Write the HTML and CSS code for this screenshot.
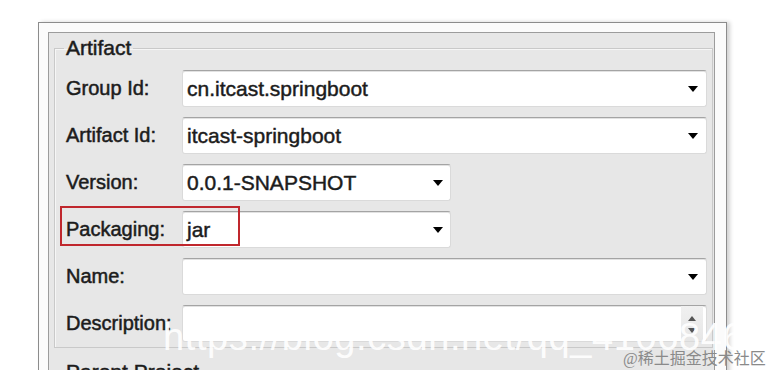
FILE: index.html
```html
<!DOCTYPE html>
<html lang="en">
  <head>
    <meta charset="utf-8">
    <link rel="stylesheet" href="styles.css">
    <title>New Maven Project</title>
  </head>
  <body>
    <div class="dialog">
      <div class="panel">
        <fieldset class="group">
          <legend>Artifact</legend>
          <div class="row">
            <label>Group Id:</label>
            <div class="field"><span>cn.itcast.springboot</span><i class="arrow"></i></div>
          </div>
          <div class="row">
            <label>Artifact Id:</label>
            <div class="field"><span>itcast-springboot</span><i class="arrow"></i></div>
          </div>
          <div class="row">
            <label>Version:</label>
            <div class="field short"><span>0.0.1-SNAPSHOT</span><i class="arrow"></i></div>
          </div>
          <div class="row marked">
            <label>Packaging:</label>
            <div class="field short"><span>jar</span><i class="arrow"></i></div>
            <span class="mark"></span>
          </div>
          <div class="row">
            <label>Name:</label>
            <div class="field"><span></span><i class="arrow"></i></div>
          </div>
          <div class="row">
            <label>Description:</label>
            <div class="field area">
              <span></span>
              <div class="scroll"><i class="up"></i><i class="down"></i></div>
            </div>
          </div>
        </fieldset>
        <fieldset class="group">
          <legend>Parent Project</legend>
          <div class="row">
            <label>Group Id:</label>
            <div class="field"><span></span><i class="arrow"></i></div>
          </div>
        </fieldset>
      </div>
    </div>
    <div class="watermark">https://blog.csdn.net/qq_41068462</div>
    <div class="credit">@稀土掘金技术社区</div>
  </body>
</html>
```

FILE: styles.css
```css
html, body {
  height: 370px;
  overflow: hidden;
}
body {
  margin: 0;
  background: #fff;
  font-family: "Liberation Sans", Arial, sans-serif;
  font-size: 21px;
  color: #1c1c1c;
  position: relative;
}
.dialog {
  margin: 22px 0 0 38px;
  width: 689px;
  height: 400px;
  box-sizing: border-box;
  border: 1px solid #8c8c8c;
  background: #fbfbfb;
  padding: 9px 11px 0 9px;
  box-shadow: 3px 0 4px rgba(0, 0, 0, 0.18);
}
.panel {
  border: 1px solid #9c9c9c;
  border-bottom: none;
  background: #e7e7e7;
  height: 400px;
  padding-top: 1px;
}
.group {
  margin: 2px 1px 0 5px;
  border: 1px solid #c9c9c9;
  box-shadow: inset 1px 1px 0 #f6f6f6;
  padding: 10px 5px 5px 11px;
}
.group + .group {
  margin-top: 12px;
}
legend {
  padding: 0 2px;
  margin-left: -2px;
  line-height: 24px;
  -webkit-text-stroke: 0.5px #1c1c1c;
}
.row {
  display: flex;
  align-items: center;
  height: 37px;
  position: relative;
}
.row + .row {
  margin-top: 10px;
}
.row label {
  width: 116px;
  flex: none;
  font-size: 20px;
  white-space: nowrap;
  -webkit-text-stroke: 0.5px #1c1c1c;
}
.field {
  flex: 1;
  height: 37px;
  box-sizing: border-box;
  display: flex;
  align-items: center;
  justify-content: space-between;
  background: #fff;
  border: 1px solid #dadada;
  border-top-color: #a4a4a4;
  border-radius: 3px;
  box-shadow: inset 0 1px 0 #e2e2e2;
  padding: 0 8px 0 4px;
  -webkit-text-stroke: 0.45px #1c1c1c;
}
.field.short {
  flex: none;
  width: 269px;
  padding-right: 7px;
}
.arrow {
  width: 0;
  height: 0;
  border-left: 5px solid transparent;
  border-right: 5px solid transparent;
  border-top: 6px solid #000;
}
.field.area {
  align-items: stretch;
  padding-right: 3px;
}
.scroll {
  width: 22px;
  display: flex;
  flex-direction: column;
  align-items: center;
  gap: 7px;
  padding-top: 10px;
  background: linear-gradient(#f0f0f0, #e6e6e6);
}
.up, .down {
  width: 0;
  height: 0;
  border-left: 4px solid transparent;
  border-right: 4px solid transparent;
}
.up {
  border-bottom: 5px solid #555;
}
.down {
  border-top: 5px solid #555;
}
.mark {
  position: absolute;
  left: -6px;
  top: -5px;
  width: 180px;
  height: 40px;
  box-sizing: border-box;
  border: 2px solid #c0272d;
}
.watermark {
  position: absolute;
  left: 163px;
  top: 316px;
  font-family: "Liberation Sans", Arial, sans-serif;
  font-size: 38px;
  letter-spacing: 0.6px;
  color: rgba(255, 255, 255, 0.92);
  white-space: nowrap;
}
.credit {
  position: absolute;
  left: 623px;
  top: 345px;
  font-family: "Liberation Serif", "Noto Sans CJK SC", serif;
  font-size: 16px;
  color: #8a8a8a;
  white-space: nowrap;
}
```
